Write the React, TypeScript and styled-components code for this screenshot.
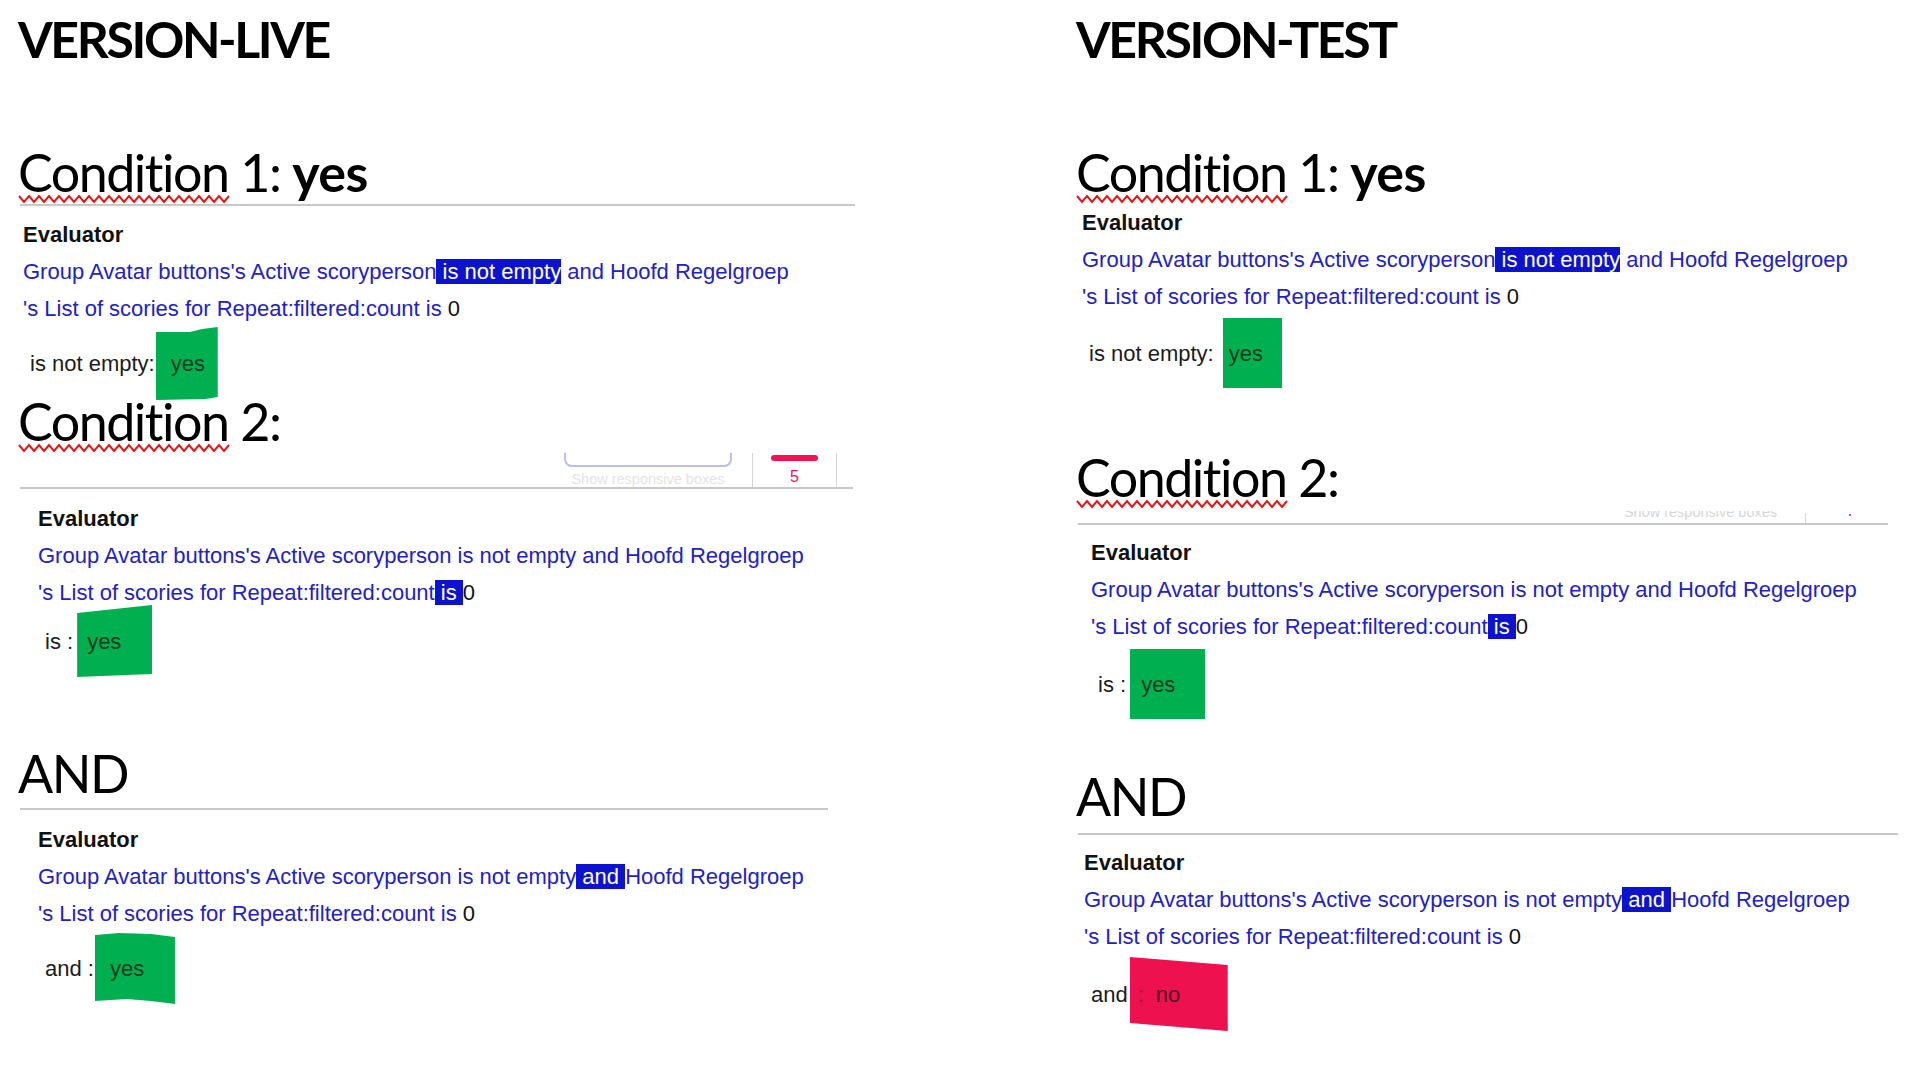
import styled, { createGlobalStyle } from "styled-components";

const GlobalStyle = createGlobalStyle`
  html, body {
    margin: 0;
    padding: 0;
    background: #ffffff;
  }
  body {
    font-family: "Liberation Sans", Arial, sans-serif;
    color: #111111;
  }
`;

const Page = styled.div`
  width: 1920px;
  height: 1068px;
  box-sizing: border-box;
  padding-top: 9px;
  overflow: hidden;
  display: grid;
  grid-template-columns: 1058px 1fr;
`;

const Column = styled.div`
  display: flex;
  flex-direction: column;
  padding-left: 18px;
`;

const Title = styled.h1`
  margin: 0;
  font-family: Lato, "Open Sans", sans-serif;
  font-weight: 700;
  font-size: 50px;
  line-height: 60px;
  letter-spacing: -2.4px;
  color: #000;
`;

const Heading = styled.h2<{ $top: number }>`
  margin: ${(p) => p.$top}px 0 0;
  font-family: Lato, "Open Sans", sans-serif;
  font-weight: 400;
  font-size: 52px;
  line-height: 44px;
  letter-spacing: -1.5px;
  color: #000;
  white-space: nowrap;

  b {
    font-weight: 700;
    letter-spacing: -0.5px;
  }
`;

const SquiggleWord = styled.span`
  position: relative;
`;

const SquiggleLine = styled.svg`
  position: absolute;
  left: 1px;
  top: calc(100% - 9px);
  width: 210px;
  height: 10px;
  overflow: visible;
`;

const zigzag = Array.from({ length: 43 }, (_, i) => `${i * 5},${i % 2 ? 8 : 2}`).join(" ");

const Squiggle = ({ children }: { children: string }) => (
  <SquiggleWord>
    {children}
    <SquiggleLine viewBox="0 0 210 10">
      <polyline points={zigzag} fill="none" stroke="#e51616" strokeWidth="2" />
    </SquiggleLine>
  </SquiggleWord>
);

const Divider = styled.hr<{ $top: number; $width: number }>`
  margin: ${(p) => p.$top}px 0 0 2px;
  width: ${(p) => p.$width}px;
  height: 2px;
  border: 0;
  background: #c8c8c8;
`;

const Toolbar = styled.div<{ $width: number; $height: number; $right: number }>`
  display: flex;
  justify-content: flex-end;
  align-items: flex-start;
  box-sizing: border-box;
  margin-left: 2px;
  width: ${(p) => p.$width}px;
  height: ${(p) => p.$height}px;
  padding-right: ${(p) => p.$right}px;
`;

const ResponsiveGroup = styled.div`
  width: 168px;
  margin: 10px 20px 0 0;
  display: flex;
  flex-direction: column;
  align-items: center;
`;

const Bracket = styled.div`
  width: 100%;
  height: 14px;
  box-sizing: border-box;
  border: 2px solid #bcbcee;
  border-top: 0;
  border-radius: 0 0 8px 8px;
`;

const Caption = styled.div`
  margin-top: 3px;
  font-size: 14.5px;
  line-height: 18px;
  color: #e4e4e4;
  white-space: nowrap;
`;

const ClippedCaption = styled.div`
  width: 155px;
  height: 9px;
  margin-top: 12px;
  overflow: hidden;
  display: flex;
  align-items: flex-end;
  justify-content: center;
  font-size: 14.5px;
  line-height: 16px;
  color: #d6d6d6;
  white-space: nowrap;
`;

const VLine = styled.div<{ $top: number; $height: number; $left?: number }>`
  width: 1px;
  margin-top: ${(p) => p.$top}px;
  margin-left: ${(p) => p.$left ?? 0}px;
  height: ${(p) => p.$height}px;
  background: #d4d4d4;
`;

const Counter = styled.div`
  width: 83px;
  padding-top: 12px;
  display: flex;
  flex-direction: column;
  align-items: center;
`;

const CounterBar = styled.div`
  width: 47px;
  height: 6px;
  border-radius: 3px;
  background: #ee1452;
`;

const CounterValue = styled.div`
  margin-top: 7px;
  font-size: 16px;
  line-height: 18px;
  color: #ee1452;
`;

const Dot = styled.div`
  width: 2px;
  height: 2px;
  margin: 15px 0 0 43px;
  background: #e0506f;
`;

const Evaluator = styled.section<{ $top: number; $indent: number }>`
  margin: ${(p) => p.$top}px 0 0 ${(p) => p.$indent}px;
  font-size: 22px;
  line-height: 37px;
`;

const EvalTitle = styled.div`
  font-weight: 700;
  color: #111;
`;

const Expr = styled.div`
  color: #2121c6;
  white-space: nowrap;
`;

const Mark = styled.span`
  background: #0d13cc;
  color: #ffffff;
`;

const Value = styled.span`
  color: #111;
`;

const Result = styled.div<{ $top: number; $gap: number }>`
  display: flex;
  align-items: center;
  gap: ${(p) => p.$gap}px;
  margin-top: ${(p) => p.$top}px;
  padding-left: 7px;
  font-size: 22px;
`;

const ResultLabel = styled.span`
  color: #1c1c1c;
  white-space: pre;
`;

const shapes = {
  rect: "none",
  waveTop: "polygon(0 5px, 55% 5px, 75% 2px, 100% 0, 100% calc(100% - 3px), 80% calc(100% - 1px), 0 100%)",
  skewUp: "polygon(0 8px, 100% 0, 100% calc(100% - 3px), 0 100%)",
  wave: "polygon(0 2px, 30% 0, 70% 1px, 100% 4px, 100% 100%, 70% calc(100% - 3px), 40% calc(100% - 5px), 0 calc(100% - 3px))",
  slant: "polygon(0 0, 100% 8px, 100% 100%, 0 calc(100% - 8px))",
};

type Shape = keyof typeof shapes;

const Badge = styled.div<{ $ok: boolean; $w: number; $h: number; $pad: number; $shape: Shape }>`
  display: flex;
  align-items: center;
  box-sizing: border-box;
  width: ${(p) => p.$w}px;
  height: ${(p) => p.$h}px;
  padding-left: ${(p) => p.$pad}px;
  background: ${(p) => (p.$ok ? "#00b050" : "#ee1150")};
  color: ${(p) => (p.$ok ? "#0b3a1c" : "#4a0a22")};
  clip-path: ${(p) => shapes[p.$shape]};
`;

const HiddenColon = styled.span`
  margin-right: 12px;
  color: #8a1a3c;
`;

type Kind = "notEmpty" | "is" | "and";

const Expression = ({ kind }: { kind: Kind }) => {
  if (kind === "notEmpty") {
    return (
      <>
        <Expr>
          Group Avatar buttons's Active scoryperson<Mark> is not empty</Mark> and Hoofd Regelgroep
        </Expr>
        <Expr>
          's List of scories for Repeat:filtered:count is <Value>0</Value>
        </Expr>
      </>
    );
  }
  if (kind === "is") {
    return (
      <>
        <Expr>Group Avatar buttons's Active scoryperson is not empty and Hoofd Regelgroep</Expr>
        <Expr>
          's List of scories for Repeat:filtered:count<Mark> is </Mark>
          <Value>0</Value>
        </Expr>
      </>
    );
  }
  return (
    <>
      <Expr>
        Group Avatar buttons's Active scoryperson is not empty<Mark> and </Mark>Hoofd Regelgroep
      </Expr>
      <Expr>
        's List of scories for Repeat:filtered:count is <Value>0</Value>
      </Expr>
    </>
  );
};

const LiveToolbar = () => (
  <Toolbar $width={833} $height={44} $right={16}>
    <ResponsiveGroup>
      <Bracket />
      <Caption>Show responsive boxes</Caption>
    </ResponsiveGroup>
    <VLine $top={10} $height={34} />
    <Counter>
      <CounterBar />
      <CounterValue>5</CounterValue>
    </Counter>
    <VLine $top={10} $height={34} />
  </Toolbar>
);

const TestToolbar = () => (
  <Toolbar $width={810} $height={24} $right={37}>
    <ClippedCaption>Show responsive boxes</ClippedCaption>
    <VLine $top={14} $height={10} $left={27} />
    <Dot />
  </Toolbar>
);

const App = () => {
  return (
    <>
      <GlobalStyle />
      <Page>
        <Column>
          <Title>VERSION-LIVE</Title>

          <Heading $top={81}>
            <Squiggle>Condition</Squiggle> 1: <b>yes</b>
          </Heading>
          <Divider $top={10} $width={835} />
          <Evaluator $top={10} $indent={5}>
            <EvalTitle>Evaluator</EvalTitle>
            <Expression kind="notEmpty" />
            <Result $top={0} $gap={1}>
              <ResultLabel>is not empty:</ResultLabel>
              <Badge $ok $w={62} $h={73} $pad={15} $shape="waveTop">yes</Badge>
            </Result>
          </Evaluator>

          <Heading $top={-1}>
            <Squiggle>Condition</Squiggle> 2:
          </Heading>
          <LiveToolbar />
          <Divider $top={0} $width={833} />
          <Evaluator $top={11} $indent={20}>
            <EvalTitle>Evaluator</EvalTitle>
            <Expression kind="is" />
            <Result $top={-6} $gap={4}>
              <ResultLabel>is :</ResultLabel>
              <Badge $ok $w={75} $h={72} $pad={10} $shape="skewUp">yes</Badge>
            </Result>
          </Evaluator>

          <Heading $top={74}>AND</Heading>
          <Divider $top={13} $width={808} />
          <Evaluator $top={11} $indent={20}>
            <EvalTitle>Evaluator</EvalTitle>
            <Expression kind="and" />
            <Result $top={1} $gap={1}>
              <ResultLabel>and :</ResultLabel>
              <Badge $ok $w={80} $h={71} $pad={15} $shape="wave">yes</Badge>
            </Result>
          </Evaluator>
        </Column>

        <Column>
          <Title>VERSION-TEST</Title>

          <Heading $top={81}>
            <Squiggle>Condition</Squiggle> 1: <b>yes</b>
          </Heading>
          <Evaluator $top={10} $indent={6}>
            <EvalTitle>Evaluator</EvalTitle>
            <Expression kind="notEmpty" />
            <Result $top={3} $gap={9}>
              <ResultLabel>is not empty:</ResultLabel>
              <Badge $ok $w={59} $h={70} $pad={6} $shape="rect">yes</Badge>
            </Result>
          </Evaluator>

          <Heading $top={67}>
            <Squiggle>Condition</Squiggle> 2:
          </Heading>
          <TestToolbar />
          <Divider $top={0} $width={810} />
          <Evaluator $top={9} $indent={15}>
            <EvalTitle>Evaluator</EvalTitle>
            <Expression kind="is" />
            <Result $top={4} $gap={4}>
              <ResultLabel>is :</ResultLabel>
              <Badge $ok $w={75} $h={70} $pad={11} $shape="rect">yes</Badge>
            </Result>
          </Evaluator>

          <Heading $top={55}>AND</Heading>
          <Divider $top={15} $width={820} />
          <Evaluator $top={9} $indent={8}>
            <EvalTitle>Evaluator</EvalTitle>
            <Expression kind="and" />
            <Result $top={2} $gap={2}>
              <ResultLabel>and</ResultLabel>
              <Badge $ok={false} $w={98} $h={74} $pad={8} $shape="slant">
                <HiddenColon>:</HiddenColon>no
              </Badge>
            </Result>
          </Evaluator>
        </Column>
      </Page>
    </>
  );
};

export default App;
